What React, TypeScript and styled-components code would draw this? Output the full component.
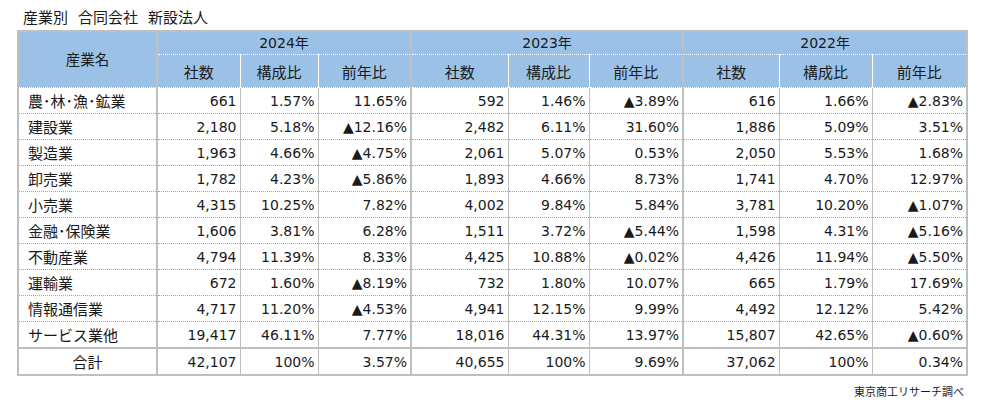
import React from "react";
import styled, { createGlobalStyle } from "styled-components";

const GlobalStyle = createGlobalStyle`
  html, body {
    margin: 0;
    padding: 0;
    background: #ffffff;
  }
  body {
    font-family: "DejaVu Sans", "Noto Sans CJK JP", sans-serif;
    color: #1a1a1a;
  }
`;

type Row = {
  name: string;
  values: string[];
};

// half width middle dots (･) as the sheet draws them
const rows: Row[] = [
  { name: "農･林･漁･鉱業", values: ["661", "1.57%", "11.65%", "592", "1.46%", "▲3.89%", "616", "1.66%", "▲2.83%"] },
  { name: "建設業", values: ["2,180", "5.18%", "▲12.16%", "2,482", "6.11%", "31.60%", "1,886", "5.09%", "3.51%"] },
  { name: "製造業", values: ["1,963", "4.66%", "▲4.75%", "2,061", "5.07%", "0.53%", "2,050", "5.53%", "1.68%"] },
  { name: "卸売業", values: ["1,782", "4.23%", "▲5.86%", "1,893", "4.66%", "8.73%", "1,741", "4.70%", "12.97%"] },
  { name: "小売業", values: ["4,315", "10.25%", "7.82%", "4,002", "9.84%", "5.84%", "3,781", "10.20%", "▲1.07%"] },
  { name: "金融･保険業", values: ["1,606", "3.81%", "6.28%", "1,511", "3.72%", "▲5.44%", "1,598", "4.31%", "▲5.16%"] },
  { name: "不動産業", values: ["4,794", "11.39%", "8.33%", "4,425", "10.88%", "▲0.02%", "4,426", "11.94%", "▲5.50%"] },
  { name: "運輸業", values: ["672", "1.60%", "▲8.19%", "732", "1.80%", "10.07%", "665", "1.79%", "17.69%"] },
  { name: "情報通信業", values: ["4,717", "11.20%", "▲4.53%", "4,941", "12.15%", "9.99%", "4,492", "12.12%", "5.42%"] },
  { name: "サービス業他", values: ["19,417", "46.11%", "7.77%", "18,016", "44.31%", "13.97%", "15,807", "42.65%", "▲0.60%"] },
];

const total: string[] = ["42,107", "100%", "3.57%", "40,655", "100%", "9.69%", "37,062", "100%", "0.34%"];

const years = ["2024年", "2023年", "2022年"];
const subHeads = ["社数", "構成比", "前年比"];
const colWidths = [139, 83, 78, 93, 97, 81, 94, 96, 93, 95];

const GRAY = "#bfbfbf";
const BLUE = "#9bc2e6";

export default function App() {
  return (
    <>
      <GlobalStyle />
      <Page>
        <Title>
          <span>産業別</span>
          <span>合同会社</span>
          <span>新設法人</span>
        </Title>
        <Table>
          <colgroup>
            {colWidths.map((w, i) => (
              <col key={i} style={{ width: w }} />
            ))}
          </colgroup>
          <thead>
            <tr>
              <NameHead rowSpan={2}>産業名</NameHead>
              {years.map((y) => (
                <YearHead key={y} colSpan={3}>
                  {y}
                </YearHead>
              ))}
            </tr>
            <tr>
              {years.map((y) =>
                subHeads.map((s, i) => (
                  <SubHead key={y + s} $groupEnd={i === 2}>
                    {s}
                  </SubHead>
                ))
              )}
            </tr>
          </thead>
          <tbody>
            {rows.map((r) => (
              <tr key={r.name}>
                <NameCell>{r.name}</NameCell>
                {r.values.map((v, i) => (
                  <NumCell key={i} $groupEnd={i % 3 === 2}>
                    {v}
                  </NumCell>
                ))}
              </tr>
            ))}
            <TotalRow>
              <NameCell $center>合計</NameCell>
              {total.map((v, i) => (
                <NumCell key={i} $groupEnd={i % 3 === 2}>
                  {v}
                </NumCell>
              ))}
            </TotalRow>
          </tbody>
        </Table>
        <Source>東京商工リサーチ調べ</Source>
      </Page>
    </>
  );
}

const Page = styled.div`
  width: 949px;
  padding: 7px 0 0 17px;
`;

const Title = styled.div`
  display: flex;
  gap: 10px;
  padding-left: 6px;
  height: 23px;
  font-family: "Noto Sans CJK JP", sans-serif;
  font-size: 15px;
  line-height: 20px;
  color: #1a1a1a;
`;

const Table = styled.table`
  border-collapse: collapse;
  table-layout: fixed;
  width: 949px;
  border: 2px solid ${GRAY};
  font-size: 14px;
`;

const HeadBase = styled.th`
  background: ${BLUE};
  font-weight: normal;
  font-family: "Noto Sans CJK JP", sans-serif;
  font-size: 14.5px;
  color: #1a1a1a;
  text-align: center;
  padding: 0;
`;

const NameHead = styled(HeadBase)`
  border-right: 2px solid ${GRAY};
  border-bottom: 1px dotted #ffffff;
  padding-bottom: 3px;
`;

const YearHead = styled(HeadBase)`
  height: 22px;
  border-right: 2px solid ${GRAY};
  border-bottom: 1px dotted #ffffff;
  font-family: "DejaVu Sans", "Noto Sans CJK JP", sans-serif;
  font-size: 14px;
  line-height: 20px;
`;

const SubHead = styled(HeadBase)<{ $groupEnd?: boolean }>`
  height: 32px;
  font-size: 15px;
  border-right: ${({ $groupEnd }) => ($groupEnd ? `2px solid ${GRAY}` : "1px solid #ffffff")};
  border-bottom: 1px dotted #ffffff;
`;

const NameCell = styled.td<{ $center?: boolean }>`
  height: 25px;
  padding: 0 0 0 ${({ $center }) => ($center ? "0" : "9px")};
  text-align: ${({ $center }) => ($center ? "center" : "left")};
  font-family: "Noto Sans CJK JP", sans-serif;
  font-size: 15px;
  border-right: 2px solid ${GRAY};
  border-bottom: 1px dotted #a6a6a6;
  white-space: nowrap;
`;

const NumCell = styled.td<{ $groupEnd?: boolean }>`
  height: 25px;
  padding: 0 3px 0 0;
  text-align: right;
  white-space: nowrap;
  border-right: ${({ $groupEnd }) => ($groupEnd ? `2px solid ${GRAY}` : `1px solid ${GRAY}`)};
  border-bottom: 1px dotted #a6a6a6;
`;

const TotalRow = styled.tr`
  td {
    border-top: 2px solid ${GRAY};
  }
`;

const Source = styled.div`
  text-align: right;
  padding: 7px 2px 0 0;
  font-family: "Noto Sans CJK JP", sans-serif;
  font-size: 11px;
  color: #1a1a1a;
`;
